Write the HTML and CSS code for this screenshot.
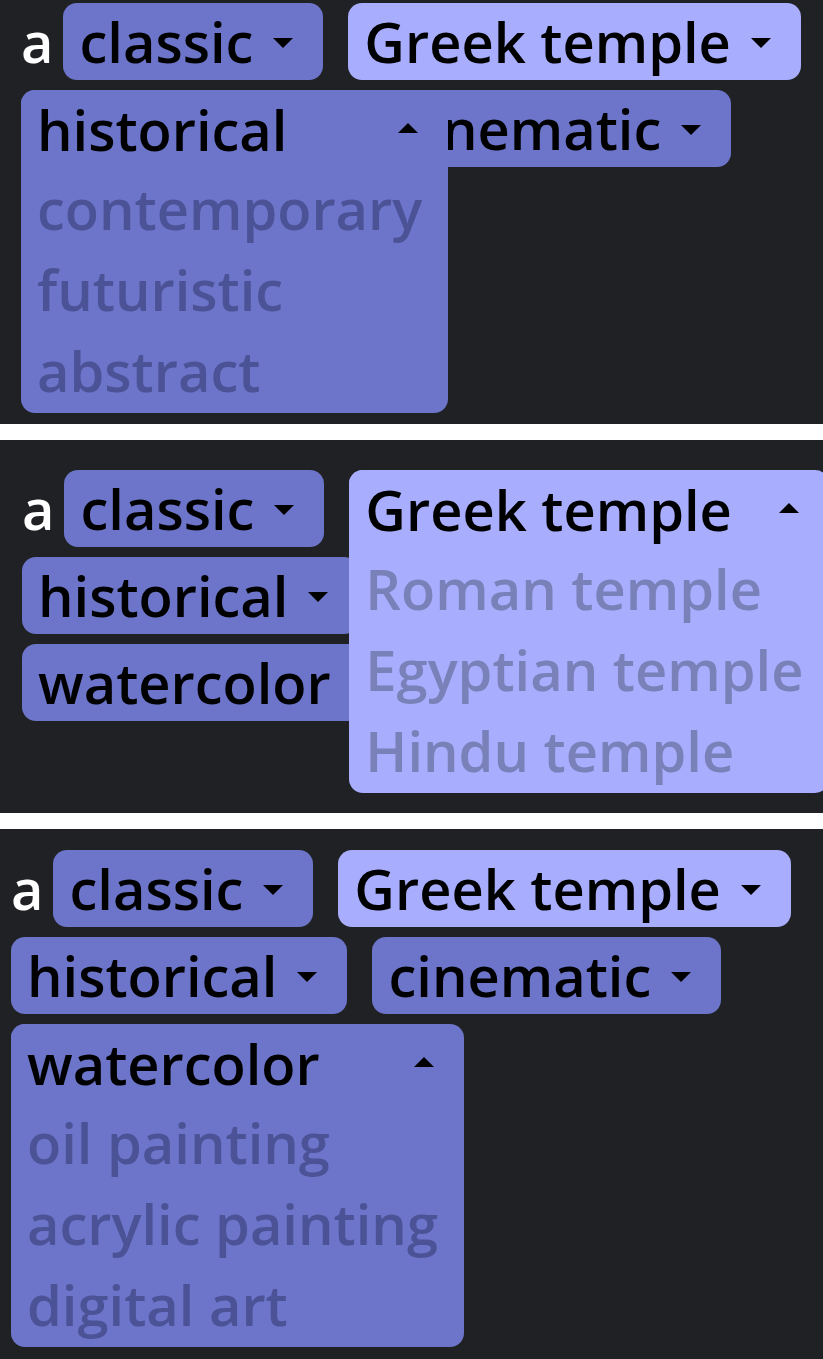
FILE: index.html
```html
<!DOCTYPE html>
<html lang="en">
<head>
<meta charset="utf-8">
<title>Prompt builder</title>
<link rel="stylesheet" href="styles.css">
</head>
<body>

<section class="panel panel--first">
  <div class="prompt">
    <span class="word">a</span>
    <span class="chip">classic<svg class="caret" viewBox="0 0 24 24"><path d="M7 10l5 5 5-5z"/></svg></span>
    <span class="chip chip--light">Greek temple<svg class="caret" viewBox="0 0 24 24"><path d="M7 10l5 5 5-5z"/></svg></span>
    <span class="slot">
      <span class="chip">historical<svg class="caret" viewBox="0 0 24 24"><path d="M7 10l5 5 5-5z"/></svg></span>
      <span class="menu">
        <span class="menu-head">historical<svg class="caret" viewBox="0 0 24 24"><path d="M7 14l5-5 5 5z"/></svg></span>
        <span class="menu-option">contemporary</span>
        <span class="menu-option">futuristic</span>
        <span class="menu-option">abstract</span>
      </span>
    </span>
    <span class="chip">cinematic<svg class="caret" viewBox="0 0 24 24"><path d="M7 10l5 5 5-5z"/></svg></span>
    <span class="chip">watercolor<svg class="caret" viewBox="0 0 24 24"><path d="M7 10l5 5 5-5z"/></svg></span>
  </div>
</section>

<section class="panel panel--second">
  <div class="prompt">
    <span class="word">a</span>
    <span class="chip">classic<svg class="caret" viewBox="0 0 24 24"><path d="M7 10l5 5 5-5z"/></svg></span>
    <span class="slot">
      <span class="chip chip--light">Greek temple<svg class="caret" viewBox="0 0 24 24"><path d="M7 10l5 5 5-5z"/></svg></span>
      <span class="menu menu--light">
        <span class="menu-head">Greek temple<svg class="caret" viewBox="0 0 24 24"><path d="M7 14l5-5 5 5z"/></svg></span>
        <span class="menu-option">Roman temple</span>
        <span class="menu-option">Egyptian temple</span>
        <span class="menu-option">Hindu temple</span>
      </span>
    </span>
    <span class="chip">historical<svg class="caret" viewBox="0 0 24 24"><path d="M7 10l5 5 5-5z"/></svg></span>
    <span class="chip">cinematic<svg class="caret" viewBox="0 0 24 24"><path d="M7 10l5 5 5-5z"/></svg></span>
    <span class="chip">watercolor<svg class="caret" viewBox="0 0 24 24"><path d="M7 10l5 5 5-5z"/></svg></span>
  </div>
</section>

<section class="panel panel--third">
  <div class="prompt">
    <span class="word">a</span>
    <span class="chip">classic<svg class="caret" viewBox="0 0 24 24"><path d="M7 10l5 5 5-5z"/></svg></span>
    <span class="chip chip--light">Greek temple<svg class="caret" viewBox="0 0 24 24"><path d="M7 10l5 5 5-5z"/></svg></span>
    <span class="chip">historical<svg class="caret" viewBox="0 0 24 24"><path d="M7 10l5 5 5-5z"/></svg></span>
    <span class="chip">cinematic<svg class="caret" viewBox="0 0 24 24"><path d="M7 10l5 5 5-5z"/></svg></span>
    <span class="slot">
      <span class="chip">watercolor<svg class="caret" viewBox="0 0 24 24"><path d="M7 10l5 5 5-5z"/></svg></span>
      <span class="menu">
        <span class="menu-head">watercolor<svg class="caret" viewBox="0 0 24 24"><path d="M7 14l5-5 5 5z"/></svg></span>
        <span class="menu-option">oil painting</span>
        <span class="menu-option">acrylic painting</span>
        <span class="menu-option">digital art</span>
      </span>
    </span>
  </div>
</section>

</body>
</html>
```
FILE: styles.css
```css
* { box-sizing: border-box; }

html, body {
  margin: 0;
  padding: 0;
  background: #ffffff;
}

body {
  display: flex;
  flex-direction: column;
  gap: 16px;
  font-family: "Open Sans", "Noto Sans", sans-serif;
  font-weight: 600;
  font-size: 56px;
  color: #000;
}

.panel {
  position: relative;
  overflow: hidden;
  background: #202124;
}

.panel--first  { height: 424px; padding: 3px 0 0 21px; }
.panel--second { height: 373px; padding: 30px 0 0 22px; }
.panel--third  { height: 530px; padding: 21px 0 0 11px; }

.prompt {
  display: flex;
  flex-wrap: wrap;
  align-items: flex-start;
  gap: 10px 25px;
}

.word {
  color: #ffffff;
  line-height: 77px;
  margin-right: -15px;
}

.chip {
  display: flex;
  align-items: center;
  height: 77px;
  line-height: 77px;
  padding: 0 16px;
  border-radius: 14px;
  background: #6c75c9;
  white-space: nowrap;
}

.chip--light { background: #a8aefd; }

.caret {
  width: 48px;
  height: 48px;
  flex: none;
  margin-left: 6px;
  fill: #000;
}

.slot {
  position: relative;
  display: flex;
}

.menu {
  position: absolute;
  top: 0;
  left: 0;
  z-index: 2;
  display: flex;
  flex-direction: column;
  padding: 0 16px 2px;
  border-radius: 14px;
  background: #6c75c9;
  color: #4b5396;
  white-space: nowrap;
}

.menu--light {
  background: #a8aefd;
  color: #7a80b8;
}

.menu-head {
  display: flex;
  align-items: center;
  justify-content: space-between;
  height: 78px;
  line-height: 78px;
  color: #000;
}

.menu-option {
  line-height: 81px;
  padding-right: 10px;
}
```
